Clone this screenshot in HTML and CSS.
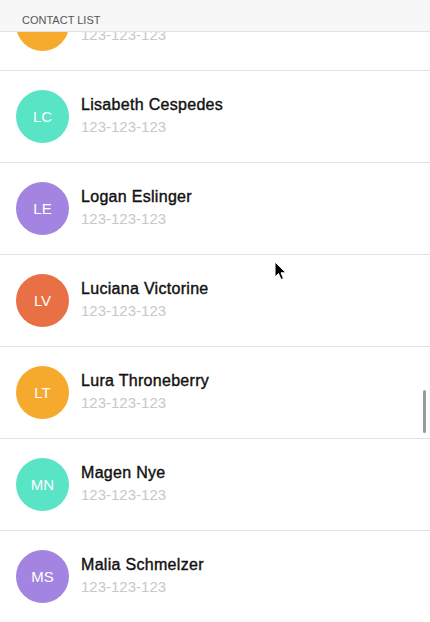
FILE: index.html
```html
<!DOCTYPE html>
<html>
<head>
<meta charset="utf-8">
<link rel="stylesheet" href="styles.css">
</head>
<body>
<div class="screen">
  <div class="header">CONTACT LIST</div>
  <ul class="list">
    <li class="row"><div class="avatar orange"></div><div class="info"><div class="name"></div><div class="phone">123-123-123</div></div></li>
    <li class="row"><div class="avatar teal">LC</div><div class="info"><div class="name">Lisabeth Cespedes</div><div class="phone">123-123-123</div></div></li>
    <li class="row"><div class="avatar purple">LE</div><div class="info"><div class="name">Logan Eslinger</div><div class="phone">123-123-123</div></div></li>
    <li class="row"><div class="avatar red">LV</div><div class="info"><div class="name">Luciana Victorine</div><div class="phone">123-123-123</div></div></li>
    <li class="row"><div class="avatar orange">LT</div><div class="info"><div class="name">Lura Throneberry</div><div class="phone">123-123-123</div></div></li>
    <li class="row"><div class="avatar teal">MN</div><div class="info"><div class="name">Magen Nye</div><div class="phone">123-123-123</div></div></li>
    <li class="row"><div class="avatar purple">MS</div><div class="info"><div class="name">Malia Schmelzer</div><div class="phone">123-123-123</div></div></li>
  </ul>
  <div class="scrollbar"></div>
  <svg class="cursor" width="14" height="20" viewBox="0 0 14 20"><path d="M1 1 L1 16 L4.5 12.5 L7 18.5 L9.5 17.5 L7 11.8 L12 11.8 Z" fill="#000" stroke="#fff" stroke-width="1"/></svg>
</div>
</body>
</html>
```

FILE: styles.css
```css
html, body {
  margin: 0;
  padding: 0;
  background: #fff;
}
.screen {
  position: relative;
  width: 430px;
  height: 622px;
  overflow: hidden;
  font-family: "Liberation Sans", Arial, sans-serif;
}
.header {
  position: absolute;
  top: 0;
  left: 0;
  right: 0;
  height: 18px;
  padding: 13px 22px 0;
  font-size: 11px;
  line-height: 14px;
  color: #555;
  background: #f7f7f7;
  border-bottom: 1px solid #e2e2e2;
  z-index: 2;
}
.list {
  list-style: none;
  margin: -21px 0 0;
  padding: 0;
}
.row {
  display: flex;
  align-items: center;
  gap: 12px;
  padding: 19px 16px;
  border-bottom: 1px solid #e2e2e2;
}
.avatar {
  flex: none;
  width: 53px;
  height: 53px;
  border-radius: 50%;
  display: flex;
  align-items: center;
  justify-content: center;
  color: #fff;
  font-size: 15px;
  opacity: 0.95;
}
.orange { background: #f5a623; }
.teal { background: #50e3c2; }
.purple { background: #9f7fe0; }
.red { background: #e8693a; }
.info {
  display: flex;
  flex-direction: column;
  gap: 2px;
  margin-bottom: 2px;
}
.name {
  height: 20px;
  font-size: 16px;
  line-height: 20px;
  font-weight: 400;
  color: #111;
  letter-spacing: 0.3px;
  -webkit-text-stroke: 0.4px #111;
}
.phone {
  font-size: 15px;
  line-height: 20px;
  color: #c8c8c8;
}
.scrollbar {
  position: absolute;
  left: 423px;
  top: 390px;
  width: 3px;
  height: 43px;
  border-radius: 2px;
  background: #9a9a9a;
}
.cursor {
  position: absolute;
  left: 274px;
  top: 261px;
}
```
